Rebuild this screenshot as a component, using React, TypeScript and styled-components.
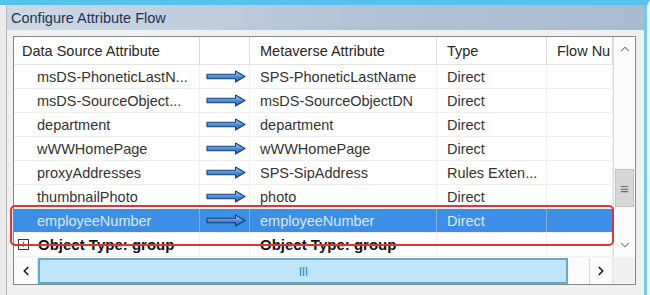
import React from "react";
import styled, { createGlobalStyle } from "styled-components";
import { ChevronUp, ChevronDown, ChevronLeft, ChevronRight } from "lucide-react";

const GlobalStyle = createGlobalStyle`
  html, body {
    margin: 0;
    padding: 0;
    background: #f0f0f0;
    overflow: hidden;
  }
  * { box-sizing: border-box; }
`;

const mappings = [
  { src: "msDS-PhoneticLastN...", mv: "SPS-PhoneticLastName", type: "Direct" },
  { src: "msDS-SourceObject...", mv: "msDS-SourceObjectDN", type: "Direct" },
  { src: "department", mv: "department", type: "Direct" },
  { src: "wWWHomePage", mv: "wWWHomePage", type: "Direct" },
  { src: "proxyAddresses", mv: "SPS-SipAddress", type: "Rules Exten..." },
  { src: "thumbnailPhoto", mv: "photo", type: "Direct" },
  { src: "employeeNumber", mv: "employeeNumber", type: "Direct", selected: true }
];

const COLS = "186px 50px 187px 110px 66px";

const FlowArrow: React.FC = () => (
  <svg width="40" height="13" viewBox="0 0 40 13">
    <defs>
      <linearGradient id="arrowFill" x1="0" y1="0" x2="0" y2="1">
        <stop offset="0" stopColor="#b8daf8" />
        <stop offset="0.5" stopColor="#4b90dd" />
        <stop offset="1" stopColor="#2760ab" />
      </linearGradient>
    </defs>
    <path
      d="M1 4.2 H29.5 V1 L39 6.5 L29.5 12 V8.8 H1 Z"
      fill="url(#arrowFill)"
      stroke="#1a3c70"
      strokeWidth="1.1"
      strokeLinejoin="round"
    />
  </svg>
);

const Grip: React.FC = () => (
  <svg width="9" height="9" viewBox="0 0 9 9">
    <path d="M1.5 0 V9 M4.5 0 V9 M7.5 0 V9" stroke="#3a98cf" strokeWidth="1.4" />
  </svg>
);

const App: React.FC = () => {
  return (
    <Screen>
      <GlobalStyle />
      <Frame>
        <TitleBar>Configure Attribute Flow</TitleBar>
        <Content>
          <ListView>
            <Table>
              <HeaderRow>
                <HeaderCell $pad={8}>Data Source Attribute</HeaderCell>
                <HeaderCell $pad={8} />
                <HeaderCell $pad={10}>Metaverse Attribute</HeaderCell>
                <HeaderCell $pad={10}>Type</HeaderCell>
                <HeaderCell $pad={10}>Flow Nu</HeaderCell>
              </HeaderRow>
              {mappings.map((m, i) => (
                <Row key={i} $selected={!!m.selected}>
                  <Cell $pad={23}>{m.src}</Cell>
                  <ArrowCell>
                    <FlowArrow />
                  </ArrowCell>
                  <Cell $pad={10}>{m.mv}</Cell>
                  <Cell $pad={10}>{m.type}</Cell>
                  <Cell $pad={10} />
                </Row>
              ))}
              <Row $selected={false}>
                <Cell $pad={4} $bold>
                  <ExpandBox>+</ExpandBox>
                  Object Type: group
                </Cell>
                <Cell $pad={0} />
                <Cell $pad={10} $bold>Object Type: group</Cell>
                <Cell $pad={10} />
                <Cell $pad={10} />
              </Row>
            </Table>
            <VScroll>
              <ScrollButton>
                <ChevronUp size={14} color="#6a6a6a" strokeWidth={1.8} />
              </ScrollButton>
              <VTrack>
                <VThumb>≡</VThumb>
              </VTrack>
              <ScrollButton>
                <ChevronDown size={14} color="#6a6a6a" strokeWidth={1.8} />
              </ScrollButton>
            </VScroll>
            <HScroll>
              <HButton>
                <ChevronLeft size={14} color="#1e1e1e" strokeWidth={3} />
              </HButton>
              <HThumb>
                <Grip />
              </HThumb>
              <HGap />
              <HButton $divider>
                <ChevronRight size={14} color="#1e1e1e" strokeWidth={3} />
              </HButton>
            </HScroll>
            <Corner />
            <Highlight />
          </ListView>
        </Content>
      </Frame>
    </Screen>
  );
};

const Screen = styled.div`
  width: 650px;
  height: 295px;
  display: flex;
  padding-left: 6px;
  border-top: 5px solid #57c2ec;
  border-right: 3px solid #f7f7f7;
  background: #ebebeb;
  font-family: "Liberation Sans", Arial, sans-serif;
`;

const Frame = styled.div`
  flex: 1;
  display: flex;
  flex-direction: column;
  border-left: 1px solid #b9b9b9;
  border-right: 3px solid #6ccbee;
  background: #f0f0f0;
`;

const TitleBar = styled.div`
  height: 25px;
  display: flex;
  align-items: center;
  padding-left: 4px;
  font-size: 14.5px;
  color: #1d3353;
  background: linear-gradient(to right, #ced9e5, #b3c3d5 55%, #a9bbcf);
`;

const Content = styled.div`
  padding: 6px 8px 0 6px;
`;

const ListView = styled.div`
  position: relative;
  display: grid;
  grid-template-columns: 599px 22px;
  grid-template-rows: 220px 27px;
  width: 623px;
  border: 1px solid #828790;
  background: #ffffff;
  font-size: 14.5px;
  color: #333333;
`;

const Table = styled.div`
  display: flex;
  flex-direction: column;
  overflow: hidden;
`;

const HeaderRow = styled.div`
  display: grid;
  grid-template-columns: ${COLS};
  height: 28px;
  border-bottom: 1px solid #e3e3e3;
`;

const HeaderCell = styled.div<{ $pad: number }>`
  display: flex;
  align-items: center;
  padding-left: ${p => p.$pad}px;
  border-right: 1px solid #dadada;
  white-space: nowrap;
  overflow: hidden;
  color: #262626;
`;

const Row = styled.div<{ $selected: boolean }>`
  display: grid;
  grid-template-columns: ${COLS};
  height: 24px;
  border-bottom: 1px solid #f0f0f0;
  background: ${p => (p.$selected ? "#3c8ee7" : "transparent")};
  color: ${p => (p.$selected ? "#dcecff" : "#333333")};
`;

const Cell = styled.div<{ $pad: number; $bold?: boolean }>`
  display: flex;
  align-items: center;
  padding-left: ${p => p.$pad}px;
  border-right: 1px solid rgba(220, 220, 220, 0.45);
  white-space: nowrap;
  overflow: hidden;
  font-weight: ${p => (p.$bold ? 700 : 400)};
  font-size: ${p => (p.$bold ? "15px" : "inherit")};
  color: ${p => (p.$bold ? "#111111" : "inherit")};
`;

const ArrowCell = styled.div`
  display: flex;
  align-items: center;
  justify-content: center;
  padding-left: 2px;
  border-right: 1px solid rgba(220, 220, 220, 0.45);
`;

const ExpandBox = styled.span`
  display: inline-flex;
  align-items: center;
  justify-content: center;
  width: 11px;
  height: 11px;
  margin-right: 9px;
  border: 1px solid #3a3a3a;
  font-size: 11px;
  line-height: 1;
  font-weight: 400;
  color: #222;
`;

const VScroll = styled.div`
  display: flex;
  flex-direction: column;
  border-left: 1px solid #dcdcdc;
  background: #fbfbfb;
`;

const ScrollButton = styled.div`
  height: 24px;
  display: flex;
  align-items: center;
  justify-content: center;
`;

const VTrack = styled.div`
  flex: 1;
  padding-top: 108px;
`;

const VThumb = styled.div`
  height: 38px;
  margin: 0 1px;
  display: flex;
  align-items: center;
  justify-content: center;
  background: #d6d6d6;
  border: 1px solid #c2c2c2;
  color: #6b6b6b;
  font-size: 15px;
`;

const HScroll = styled.div`
  display: flex;
  align-items: stretch;
  padding-top: 1px;
  background: #fbfbfb;
`;

const HButton = styled.div<{ $divider?: boolean }>`
  width: 24px;
  display: flex;
  align-items: center;
  justify-content: center;
  border-left: ${p => (p.$divider ? "1px solid #d6d6d6" : "none")};
  border-right: 1px solid #e4e4e4;
`;

const HThumb = styled.div`
  width: 530px;
  display: flex;
  align-items: center;
  justify-content: center;
  background: #bfe5fa;
  border: 2px solid #62abca;
`;

const HGap = styled.div`
  flex: 1;
`;

const Corner = styled.div`
  background: #f0f0f0;
`;

const Highlight = styled.div`
  position: absolute;
  left: -4px;
  top: 168px;
  width: 604px;
  height: 41px;
  border: 2px solid #d7373b;
  border-radius: 5px;
  pointer-events: none;
`;

export default App;
